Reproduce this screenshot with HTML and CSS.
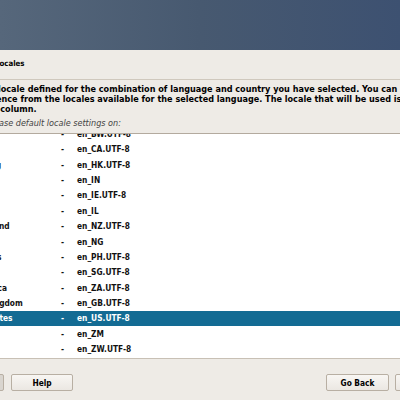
FILE: index.html
```html
<!DOCTYPE html>
<html>
<head>
<meta charset="utf-8">
<link rel="stylesheet" href="styles.css">
</head>
<body>
<div class="screen">
  <div class="band"></div>
  <div class="head">
    <div class="title">Locales</div>
  </div>
  <div class="body">
    <div class="desc">
      <div class="line">There is no locale defined for the combination of language and country you have selected. You can now select</div>
      <div class="line">your preference from the locales available for the selected language. The locale that will be used is listed in the</div>
      <div class="line">the second column.</div>
    </div>
    <div class="hint">ase default locale settings on:</div>
    <div class="list">
      <div class="rows">
        <div class="row"><span class="country">Botswana</span><span class="dash">-</span><span class="loc">en_BW.UTF-8</span></div>
        <div class="row"><span class="country">Canada</span><span class="dash">-</span><span class="loc">en_CA.UTF-8</span></div>
        <div class="row"><span class="country">Hong Kong</span><span class="dash">-</span><span class="loc">en_HK.UTF-8</span></div>
        <div class="row"><span class="country">India</span><span class="dash">-</span><span class="loc">en_IN</span></div>
        <div class="row"><span class="country">Ireland</span><span class="dash">-</span><span class="loc">en_IE.UTF-8</span></div>
        <div class="row"><span class="country">Israel</span><span class="dash">-</span><span class="loc">en_IL</span></div>
        <div class="row"><span class="country">New Zealand</span><span class="dash">-</span><span class="loc">en_NZ.UTF-8</span></div>
        <div class="row"><span class="country">Nigeria</span><span class="dash">-</span><span class="loc">en_NG</span></div>
        <div class="row"><span class="country">Philippines</span><span class="dash">-</span><span class="loc">en_PH.UTF-8</span></div>
        <div class="row"><span class="country">Singapore</span><span class="dash">-</span><span class="loc">en_SG.UTF-8</span></div>
        <div class="row"><span class="country">South Africa</span><span class="dash">-</span><span class="loc">en_ZA.UTF-8</span></div>
        <div class="row"><span class="country">United Kingdom</span><span class="dash">-</span><span class="loc">en_GB.UTF-8</span></div>
        <div class="row selected"><span class="country">United States</span><span class="dash">-</span><span class="loc">en_US.UTF-8</span></div>
        <div class="row"><span class="country">Zambia</span><span class="dash">-</span><span class="loc">en_ZM</span></div>
        <div class="row"><span class="country">Zimbabwe</span><span class="dash">-</span><span class="loc">en_ZW.UTF-8</span></div>
      </div>
    </div>
  </div>
  <div class="footer">
    <div class="btn btn-cut">Screenshot</div>
    <div class="btn btn-help">Help</div>
    <div class="spacer"></div>
    <div class="btn btn-back">Go Back</div>
    <div class="btn btn-next">Continue</div>
  </div>
</div>
</body>
</html>
```

FILE: styles.css
```css
html, body {
  margin: 0;
  padding: 0;
  background: #eeebe6;
}
.screen {
  width: 400px;
  height: 400px;
  overflow: hidden;
  background: #eeebe6;
  font-family: "DejaVu Sans Condensed", "DejaVu Sans", sans-serif;
  font-stretch: semi-condensed;
  font-weight: bold;
  font-size: 8.3px;
  color: #000;
}
.band {
  height: 50px;
  background: linear-gradient(to right, #56677b, #475970 50%, #3d5171);
}
.head {
  height: 30px;
  padding-top: 7px;
  box-sizing: border-box;
  border-bottom: 1px solid #cfc8bd;
  margin-left: -5px;
}
.title {
  font-size: 7.8px;
  line-height: 14px;
}
.body {
  margin-left: -45px;
  width: 530px;
}
.desc {
  padding-top: 4px;
  margin-left: -10.8px;
  font-size: 9.03px;
}
.line {
  line-height: 10px;
  height: 10px;
  white-space: nowrap;
}
.line:last-child {
  padding-left: 3px;
}
.hint {
  margin-top: 4px;
  line-height: 10px;
  height: 10px;
  padding-left: 44px;
  font-size: 9px;
  font-weight: normal;
  font-style: italic;
  color: #444;
  white-space: nowrap;
}
.list {
  margin-top: 5px;
  border-top: 1px solid #b3aa9e;
  height: 224px;
  overflow: hidden;
  background: #fff;
}
.rows {
  margin-top: -7.7px;
}
.row {
  display: flex;
  align-items: center;
  height: 15.36px;
  white-space: nowrap;
  color: #111;
}
.row.selected {
  background: #136b93;
  color: #fff;
}
.country {
  width: 106px;
  flex: none;
}
.dash {
  width: 16px;
  flex: none;
}
.footer {
  border-top: 1px solid #c8c0b5;
  display: flex;
  align-items: flex-start;
  padding-top: 15px;
  gap: 6px;
}
.btn {
  height: 17px;
  box-sizing: border-box;
  border: 1px solid #b8afa3;
  border-radius: 2px;
  background: linear-gradient(#f8f6f3, #ebe7e2);
  display: flex;
  align-items: center;
  justify-content: center;
  flex: none;
  white-space: nowrap;
}
.btn-cut {
  width: 60px;
  margin-left: -56px;
  background: #d9d5cf;
  color: transparent;
}
.btn-help {
  width: 62px;
  margin-left: 1px;
}
.spacer {
  flex: 1;
}
.btn-back {
  width: 63px;
}
.btn-next {
  width: 63px;
  margin-right: -58px;
}
```
